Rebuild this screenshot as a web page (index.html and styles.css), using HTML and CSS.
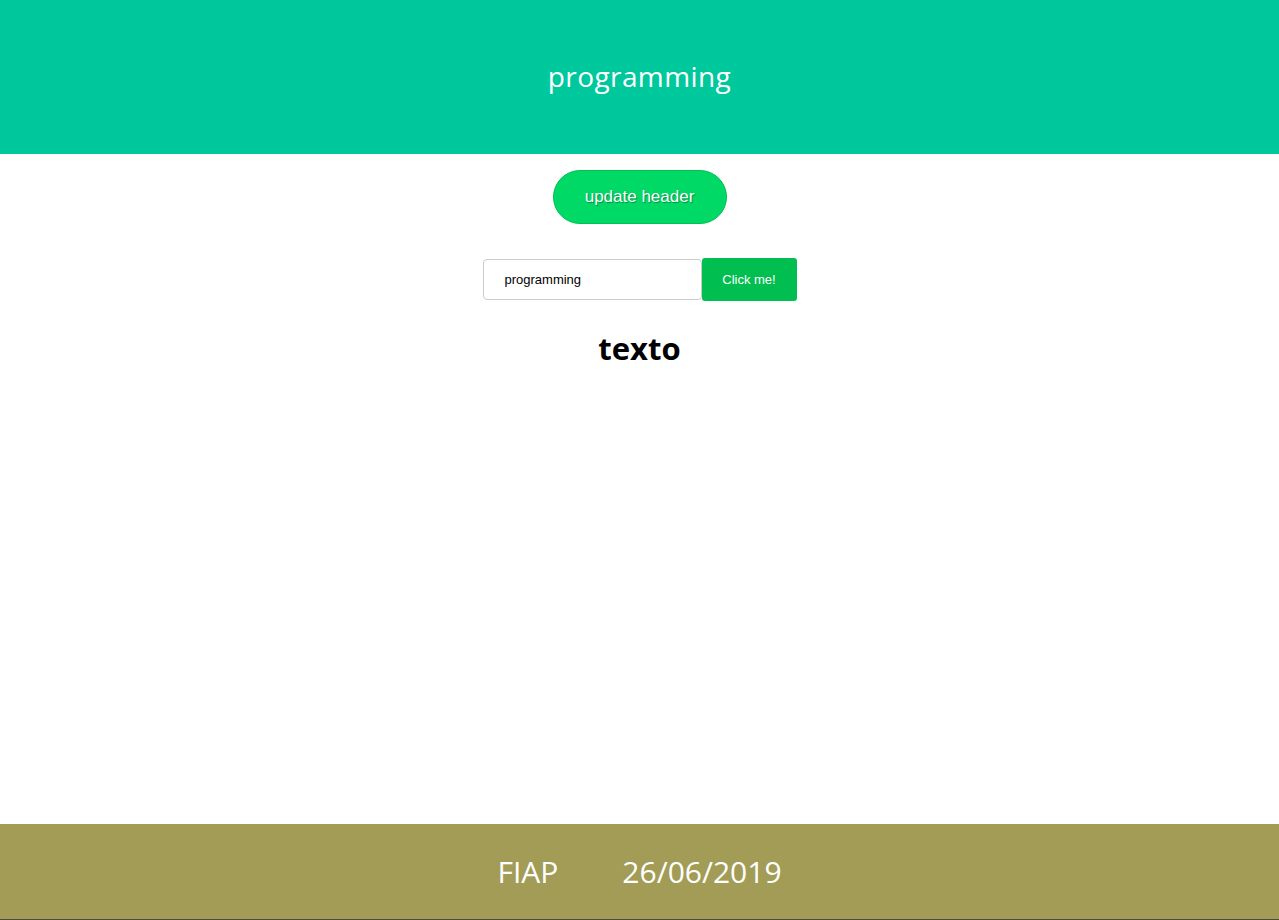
FILE: index.html
```html
<!DOCTYPE html>
<html>
<head>
<meta charset="utf-8">
<link rel="stylesheet" href="styles.css">
</head>
<body>
<div class="app">
  <header class="header"><h1 class="title">programming</h1></header>
  <main class="main">
    <button class="pill">update header</button>
    <div class="form">
      <input class="field" type="text" value="programming">
      <button class="go">Click me!</button>
    </div>
    <h2 class="texto">texto</h2>
  </main>
  <footer class="footer">
    <span class="foot-item">FIAP</span>
    <span class="foot-item">26/06/2019</span>
  </footer>
</div>
</body>
</html>
```
FILE: styles.css
```css
html, body { margin: 0; padding: 0; }
body { font-family: "Open Sans", sans-serif; background: #fff; }
.app { display: flex; flex-direction: column; height: 920px; }
.header {
  height: 154px; background: #00c89d; display: flex;
  align-items: center; justify-content: center;
}
.title { margin: 0 0 2px; font-weight: 400; font-size: 28px; color: #fff; letter-spacing: 0.4px; }
.main { flex: 1; display: flex; flex-direction: column; align-items: center; }
.pill {
  margin-top: 16px; width: 174px; height: 54px; border-radius: 27px;
  background: #00d966; border: 1px solid #00c050; color: #fff;
  font-family: "Liberation Sans", sans-serif; font-size: 17px;
  text-shadow: 1px 1px 1px rgba(0,0,0,0.35); cursor: pointer;
}
.form { display: flex; align-items: center; margin-top: 34px; }
.field {
  box-sizing: border-box; width: 219px; height: 41px; border: 1px solid #ccc;
  border-radius: 4px; padding: 0 0 0 21px; font-family: "Liberation Sans", sans-serif;
  font-size: 13px; color: #000; outline: none;
}
.go {
  width: 95px; height: 43px; background: #00bf50; border: none; border-radius: 3px;
  color: #fff; font-family: "Liberation Sans", sans-serif; font-size: 13px;
}
.texto { margin: 26px 0 0; font-size: 31px; font-weight: 700; color: #000; }
.footer {
  height: 95px; background: #a39c56; border-bottom: 1px solid #4a4a40;
  display: flex; align-items: center; justify-content: center; gap: 64px;
  color: #fff; font-size: 30px;
}
```
